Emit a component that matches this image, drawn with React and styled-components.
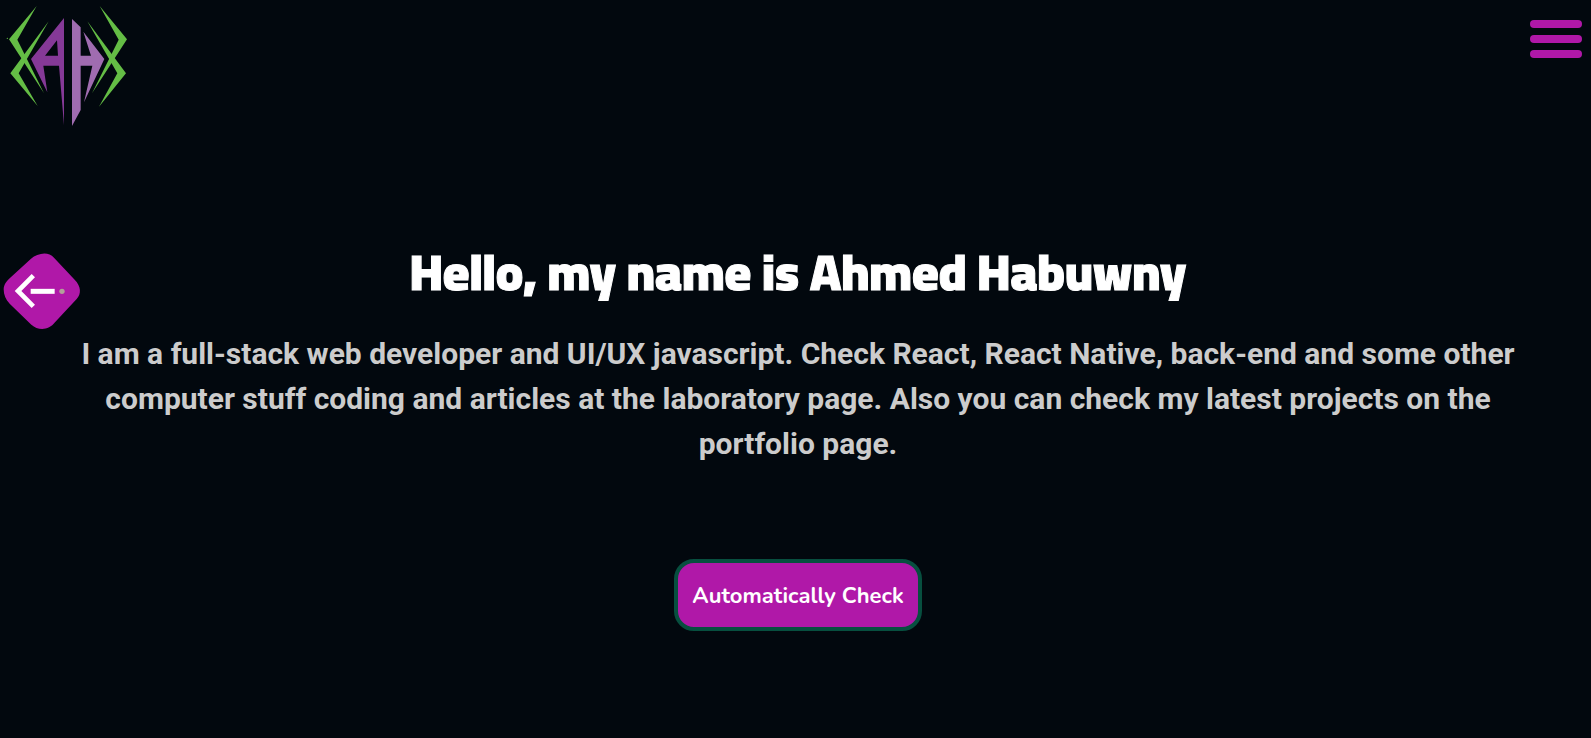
import React from "react";
import styled, { createGlobalStyle } from "styled-components";

const GlobalStyle = createGlobalStyle`
  *, *::before, *::after { box-sizing: border-box; }
  body {
    margin: 0;
    background: #02080e;
    color: #fff;
    font-family: Roboto, "Liberation Sans", sans-serif;
  }
`;

const Page = styled.div`
  display: flex;
  flex-direction: column;
  min-height: 100vh;
`;

const Header = styled.header`
  display: flex;
  justify-content: space-between;
  align-items: flex-start;
  padding-right: 9px;
`;

const HomeLink = styled.a`
  display: block;
  line-height: 0;
`;

const MenuButton = styled.button`
  display: flex;
  flex-direction: column;
  gap: 7px;
  width: 52px;
  margin: 20px 0 0;
  padding: 0;
  border: 0;
  background: none;
  cursor: pointer;
`;

const MenuBar = styled.span`
  height: 8px;
  border-radius: 4px;
  background: #b018a8;
`;

const Main = styled.main`
  display: flex;
  flex-direction: column;
  align-items: center;
  padding: 108px 72px 0 77px;
  text-align: center;
`;

const Title = styled.h1`
  margin: 0;
  font-family: Cairo, Roboto, sans-serif;
  font-size: 50px;
  font-weight: 900;
  line-height: 72px;
  -webkit-text-stroke: 1px #fff;
`;

const Intro = styled.p`
  margin: 23px 0 0;
  color: #ccc;
  font-size: 30px;
  font-weight: 700;
  line-height: 45px;
`;

const CheckButton = styled.button`
  margin: 93px 0 0;
  height: 72px;
  padding: 2px 14px 0;
  border: 4px solid #074f3f;
  border-radius: 20px;
  background: #b018a8;
  color: #fff;
  font-family: Nunito, Lato, sans-serif;
  font-size: 22px;
  font-weight: 700;
  cursor: pointer;
`;

const BackButton = styled.button`
  position: fixed;
  top: 245px;
  left: 0;
  padding: 0;
  border: 0;
  background: none;
  line-height: 0;
  cursor: pointer;
`;

function Logo() {
  return (
    <svg width="140" height="128" viewBox="0 0 420 384" aria-hidden="true">
      <g fill="#64bd45">
        <path d="M110 18 27 118 132 280 52 119Z" />
        <path d="M146 64 31 220 113 318 56 220Z" />
        <path d="M299 18 381 118 276 280 356 119Z" />
        <path d="M262 64 378 220 297 320 352 220Z" />
        <circle cx="22" cy="115" r="2" />
      </g>
      <path
        fill="#853997"
        fillRule="evenodd"
        d="M192 54 93 177 142 277 130 197H177L192 376ZM171 121 135 167H174Z"
      />
      <path
        fill="#a06cb0"
        d="M216 57 242 82V167H273L250 95 313 177 252 307 277 197H242V330L216 378Z"
      />
    </svg>
  );
}

function BackIcon() {
  return (
    <svg width="90" height="90" viewBox="0 0 270 270" aria-hidden="true">
      <path
        fill="#b018a8"
        d="M11 133C11 118 20 107 34 95L93 41C112 25 144 17 162 38L224 104C244 124 244 147 230 162L165 232C146 257 114 257 94 239L29 176C17 164 11 149 11 133Z"
      />
      <path d="M100 92 54 138 100 184" fill="none" stroke="#fff" strokeWidth="14" />
      <path d="M92 139H164" stroke="#fff" strokeWidth="15" />
      <circle cx="186" cy="139" r="8" fill="#b3a09a" />
    </svg>
  );
}

export default function App() {
  return (
    <Page>
      <GlobalStyle />
      <Header>
        <HomeLink href="#home" aria-label="Home">
          <Logo />
        </HomeLink>
        <MenuButton type="button" aria-label="Menu">
          <MenuBar />
          <MenuBar />
          <MenuBar />
        </MenuButton>
      </Header>
      <Main>
        <Title>Hello, my name is Ahmed Habuwny</Title>
        <Intro>
          I am a full-stack web developer and UI/UX javascript. Check React, React Native, back-end
          and some other computer stuff coding and articles at the laboratory page. Also you can
          check my latest projects on the portfolio page.
        </Intro>
        <CheckButton type="button">Automatically Check</CheckButton>
      </Main>
      <BackButton type="button" aria-label="Back">
        <BackIcon />
      </BackButton>
    </Page>
  );
}
